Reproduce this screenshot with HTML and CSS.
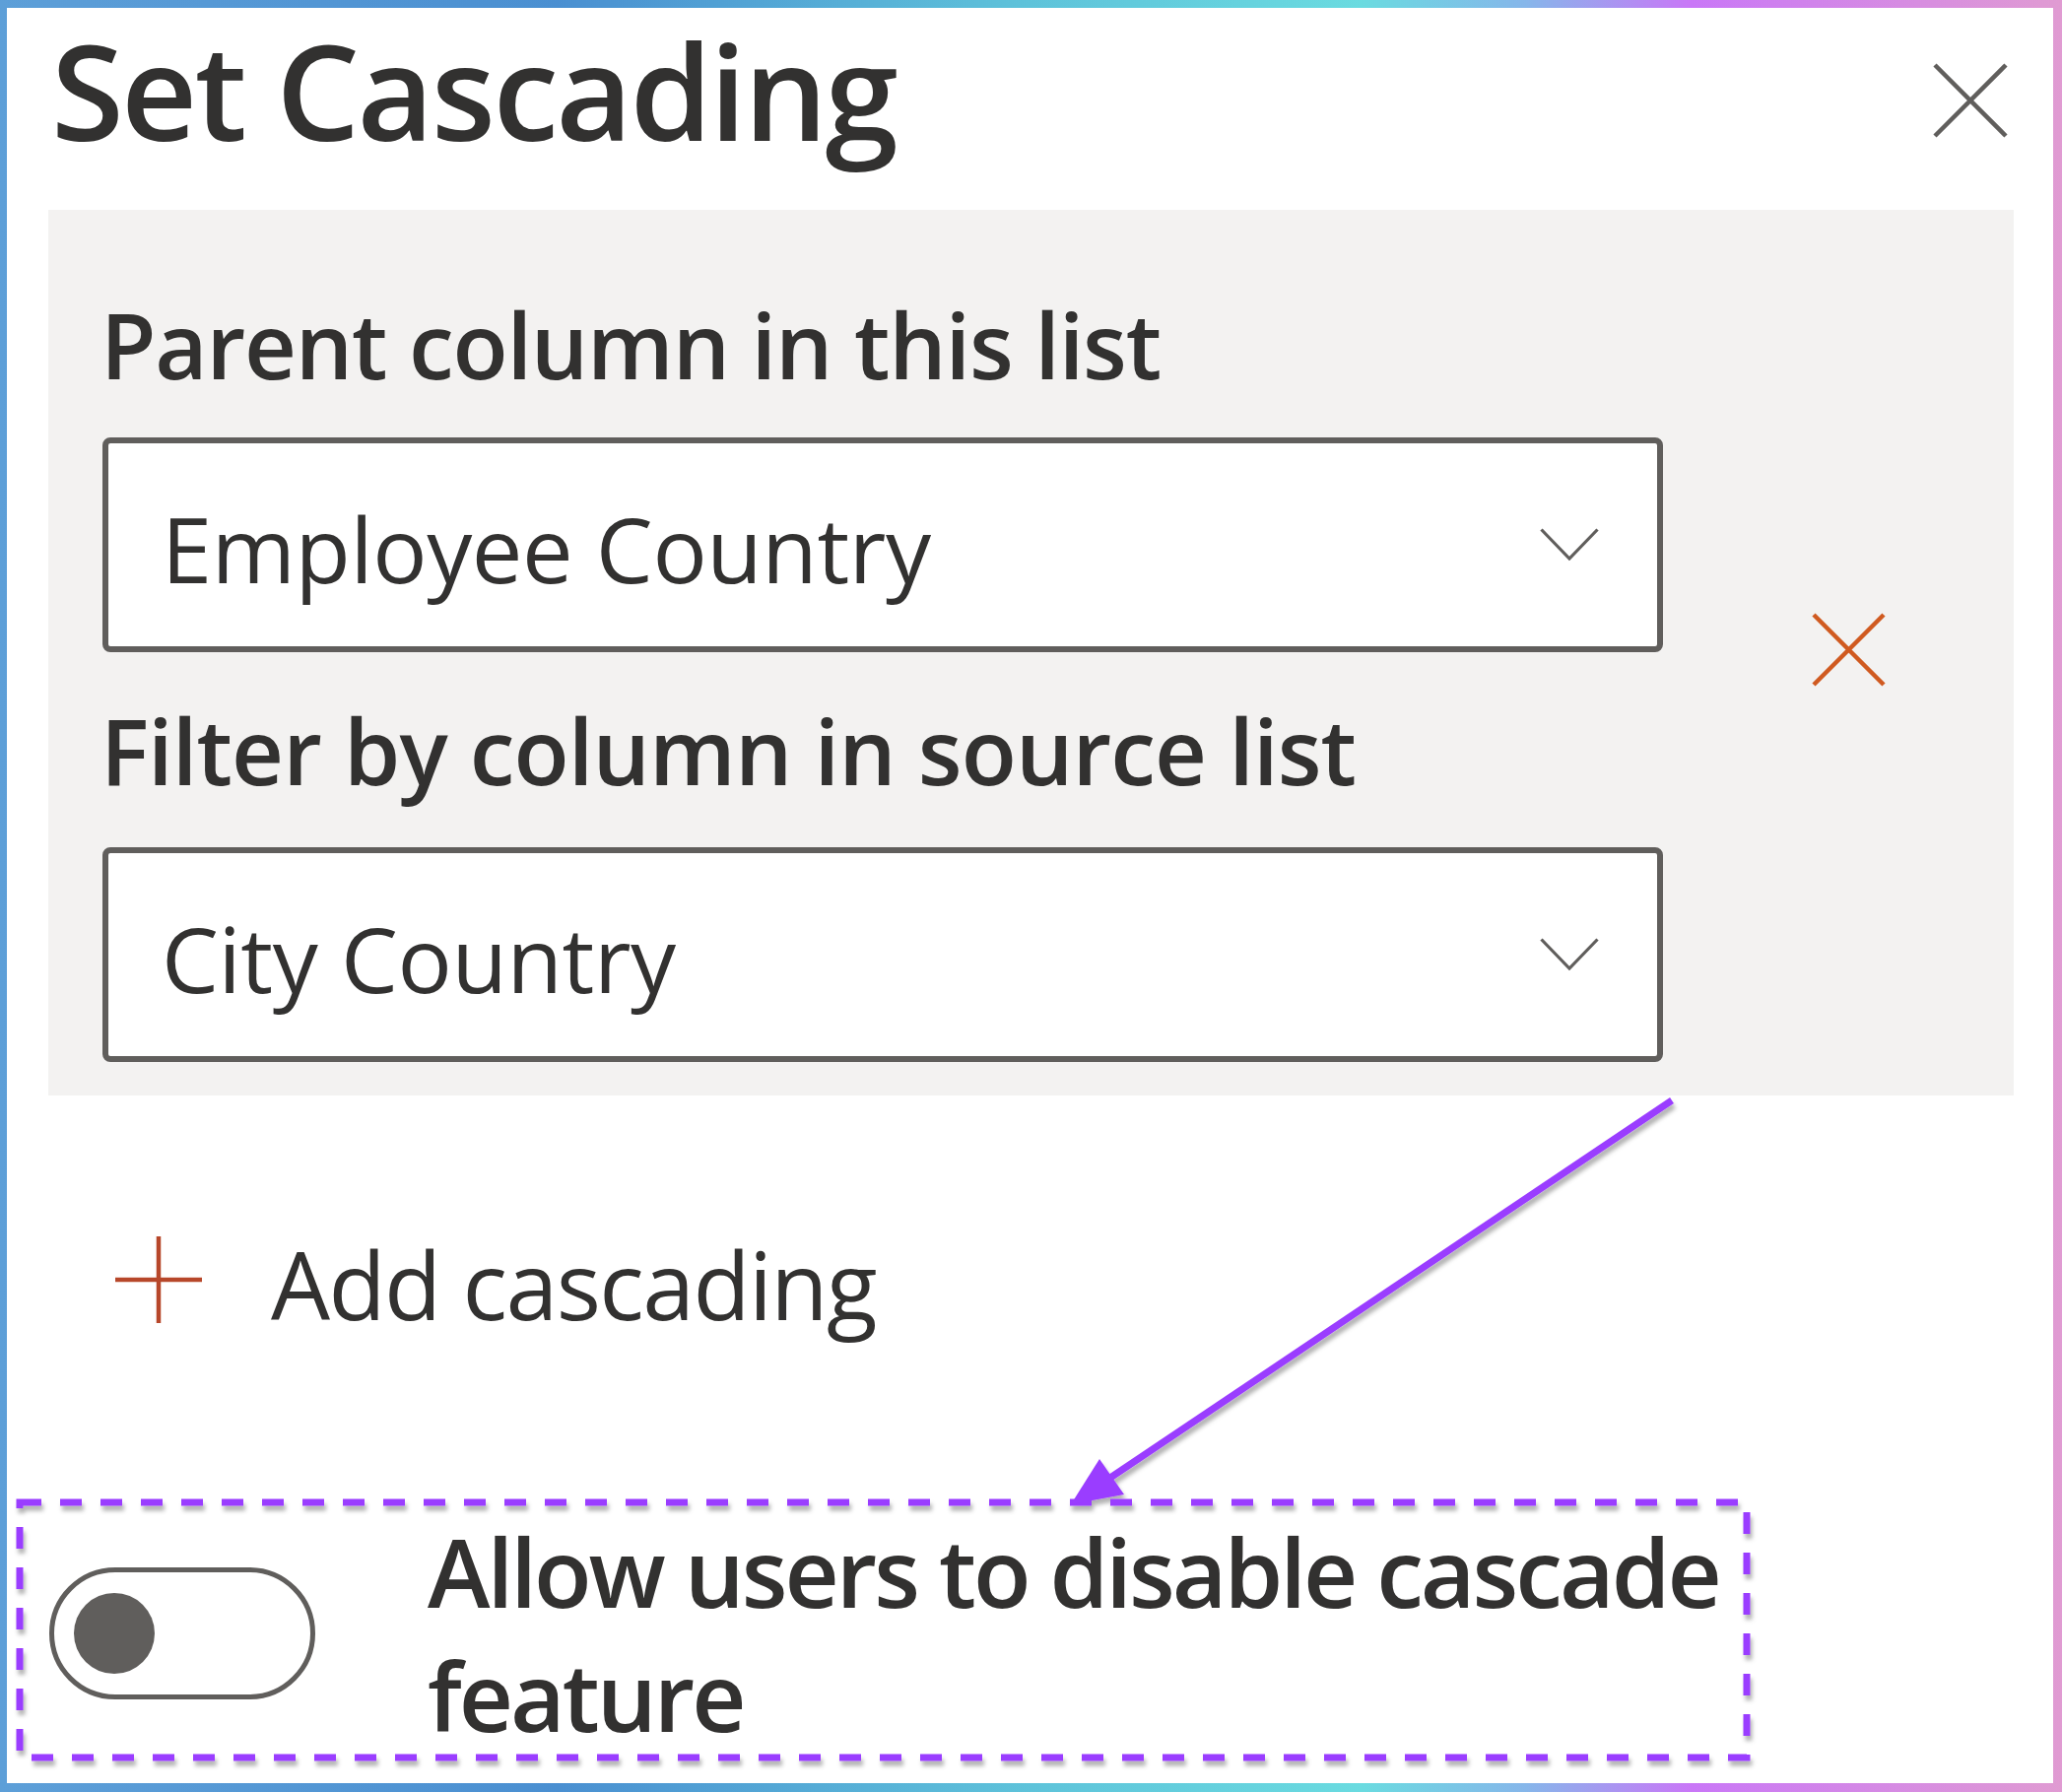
FILE: index.html
```html
<!DOCTYPE html>
<html lang="en">
<head>
<meta charset="utf-8">
<title>Set Cascading</title>
<link rel="stylesheet" href="styles.css">
</head>
<body>
<div class="frame">
  <div class="dialog">
    <header class="header">
      <h1 class="title">Set Cascading</h1>
      <button class="close" aria-label="Close">
        <svg width="76" height="76" viewBox="0 0 76 76"><path d="M2 2 L74 74 M74 2 L2 74" stroke="#605e5c" stroke-width="4.5" fill="none"/></svg>
      </button>
    </header>
    <section class="panel">
      <div class="fields">
        <label class="field-label first">Parent column in this list</label>
        <div class="dropdown">
          <span class="dd-text">Employee Country</span>
          <svg class="chev" width="60" height="34" viewBox="0 0 60 34"><path d="M1.5 1.5 L30 31 L58.5 1.5" stroke="#605e5c" stroke-width="3.2" fill="none"/></svg>
        </div>
        <label class="field-label second">Filter by column in source list</label>
        <div class="dropdown">
          <span class="dd-text">City Country</span>
          <svg class="chev" width="60" height="34" viewBox="0 0 60 34"><path d="M1.5 1.5 L30 31 L58.5 1.5" stroke="#605e5c" stroke-width="3.2" fill="none"/></svg>
        </div>
      </div>
      <button class="remove" aria-label="Remove">
        <svg width="75" height="75" viewBox="0 0 75 75"><path d="M2 2 L73 73 M73 2 L2 73" stroke="#d05a20" stroke-width="4.5" fill="none"/></svg>
      </button>
    </section>
    <div class="add-row">
      <svg class="plus" width="88" height="88" viewBox="0 0 88 88"><path d="M44 0 V88 M0 44 H88" stroke="#b7472a" stroke-width="4.5" fill="none"/></svg>
      <span class="add-text">Add cascading</span>
    </div>
    <div class="toggle-row">
      <span class="toggle"><span class="knob"></span></span>
      <span class="toggle-label">Allow users to disable cascade feature</span>
    </div>
  </div>
  <svg class="annot" width="2093" height="1819" viewBox="0 0 2093 1819">
    <defs>
      <filter id="sh" filterUnits="userSpaceOnUse" x="0" y="0" width="2093" height="1819">
        <feDropShadow dx="2" dy="5" stdDeviation="2" flood-color="#000" flood-opacity="0.3"/>
      </filter>
    </defs>
    <g filter="url(#sh)">
      <rect x="20" y="1525" width="1753" height="259" fill="none" stroke="#9a3cff" stroke-width="7" stroke-dasharray="22 19"/>
      <line x1="1697" y1="1117" x2="1118" y2="1506" stroke="#9a3cff" stroke-width="7"/>
      <polygon points="1087,1527 1141,1517 1116,1481" fill="#9a3cff"/>
    </g>
  </svg>
</div>
</body>
</html>
```
FILE: styles.css
```css
* { box-sizing: border-box; }
html, body { margin: 0; padding: 0; }
body {
  width: 2093px;
  height: 1819px;
  font-family: "Open Sans", "Noto Sans", "Liberation Sans", sans-serif;
  color: #323130;
  background: #fff;
}
.frame {
  position: relative;
  width: 2093px;
  height: 1819px;
  padding: 8px 9px 9px 7px;
  background: linear-gradient(90deg, #5d9fd8 0%, #4a8fd1 27%, #5ec3da 50%, #6adbe0 66%, #86b6ea 74%, #c977f7 82%, #e09bd2 100%);
}
.dialog {
  background: #fff;
  height: 100%;
  display: flex;
  flex-direction: column;
}
.header {
  display: flex;
  justify-content: space-between;
  align-items: flex-start;
  padding: 16px 46px 0 45px;
}
.title {
  margin: 0;
  font-size: 134px;
  font-weight: 600;
  line-height: 1;
  letter-spacing: -2.6px;
}
.close {
  margin-top: 40px;
  width: 76px;
  height: 76px;
  padding: 0;
  border: 0;
  background: none;
  display: block;
}
.close svg, .remove svg, .plus, .chev { display: block; }
.panel {
  margin: 55px 40px 0 42px;
  padding: 91px 0 34px 55px;
  background: #f3f2f1;
  display: flex;
  align-items: flex-start;
}
.fields { width: 1584px; flex-shrink: 0; }
.field-label {
  display: block;
  font-size: 92px;
  font-weight: 600;
  line-height: 1;
  letter-spacing: -1.2px;
  margin-left: -2px;
}
.field-label.first { margin-bottom: 48px; }
.field-label.second { margin-top: 54px; margin-bottom: 52px; letter-spacing: -0.9px; }
.dropdown {
  height: 218px;
  border: 6px solid #605e5c;
  border-radius: 8px;
  background: #fff;
  display: flex;
  align-items: center;
  justify-content: space-between;
  padding: 0 59px 0 54px;
}
.dd-text {
  font-size: 92px;
  font-weight: 400;
  line-height: 1;
  letter-spacing: -0.4px;
  padding-top: 8px;
}
.remove {
  margin: 318px 0 0 151px;
  width: 75px;
  height: 75px;
  padding: 0;
  border: 0;
  background: none;
}
.add-row {
  display: flex;
  align-items: flex-start;
  margin: 143px 0 0 110px;
}
.add-text {
  margin-left: 70px;
  margin-top: 1px;
  font-size: 95px;
  font-weight: 400;
  line-height: 1;
  letter-spacing: -1.6px;
}
.toggle-row {
  display: flex;
  align-items: center;
  margin: 181px 0 0 43px;
}
.toggle {
  flex-shrink: 0;
  width: 270px;
  height: 134px;
  border: 5px solid #605e5c;
  border-radius: 67px;
  display: flex;
  align-items: center;
  padding-left: 20px;
}
.knob {
  width: 82px;
  height: 82px;
  border-radius: 50%;
  background: #605e5c;
}
.toggle-label {
  margin-left: 114px;
  width: 1340px;
  font-size: 96px;
  font-weight: 600;
  line-height: 126px;
  letter-spacing: -3px;
}
.annot {
  position: absolute;
  left: 0;
  top: 0;
  pointer-events: none;
}
```
